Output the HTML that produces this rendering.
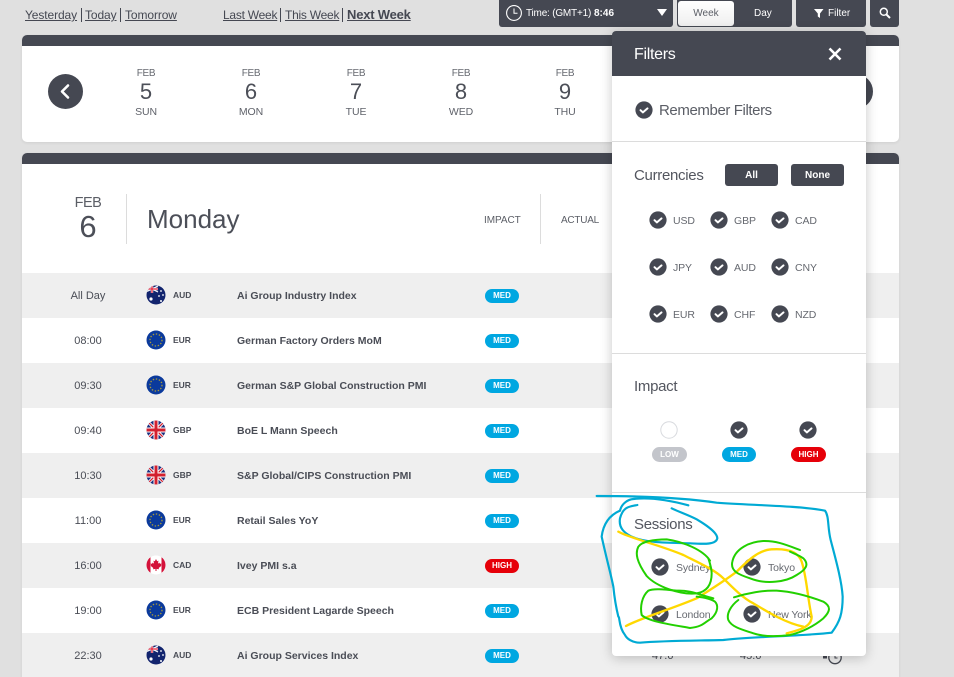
<!DOCTYPE html>
<html><head><meta charset="utf-8"><title>Calendar</title>
<style>
html,body{margin:0;padding:0;width:954px;height:677px;overflow:hidden;background:#e0e0e0}
body{position:relative;font-family:"Liberation Sans",sans-serif;color:#454852}
.a{position:absolute;white-space:nowrap}
.c{transform:translateX(-50%);text-align:center}
.lnk{top:8px;font-size:12px;line-height:14px;text-decoration:underline;color:#454852;letter-spacing:-.1px}
.sep{top:8px;width:1px;height:14px;background:#454852}
.card{position:absolute;left:22px;width:877px;background:#fff;border-radius:5px;box-shadow:0 1px 3px rgba(0,0,0,.08);overflow:hidden}
.bar{position:absolute;left:0;top:0;width:100%;height:11px;background:#454852}
.dk{position:absolute;background:#454852;border-radius:3px;color:#fff}
.m{font-size:10px;line-height:12px;color:#666970;top:68px;letter-spacing:-.3px}
.n{font-size:22px;line-height:24px;color:#4c4f58;top:80px}
.w{font-size:10.5px;line-height:12px;color:#5f626a;top:106px;letter-spacing:-.1px}
.r{position:absolute;left:22px;width:877px;height:45px}
.g{background:#efefef}.wh{background:#fff}
.t{position:absolute;left:0;width:132px;text-align:center;top:17px;font-size:11px;line-height:13px;color:#4a4d56}
.f{position:absolute;left:124px;top:12px;width:20px;height:20px}
.cur{position:absolute;left:151px;top:17px;font-size:8.5px;line-height:10px;font-weight:bold;color:#4a4d56}
.ti{position:absolute;left:215px;top:17px;font-size:10.5px;line-height:13px;font-weight:bold;color:#4a4d56;white-space:nowrap}
.pill{position:absolute;border-radius:8px;color:#fff;font-weight:bold;font-size:8px;text-align:center;height:14px;line-height:14px}
.med{background:#00a7e1}.high{background:#e60009}.low{background:#c3c5cb}
.r .pill{left:463px;top:16px;width:34px}
.pop{position:absolute;left:612px;top:31px;width:254px;height:625px;background:#fff;border-radius:4px;box-shadow:0 2px 12px rgba(0,0,0,.22);z-index:5}
.hr{position:absolute;left:612px;width:254px;height:1px;background:#dcdcdc;z-index:6}
.z{z-index:6}
.h2{font-size:15px;line-height:20px;color:#53565f;left:634px;letter-spacing:-.3px}
.lb{font-size:10.5px;line-height:14px;color:#666970;letter-spacing:-.1px}
.ck{position:absolute;width:18px;height:18px;z-index:6}
</style></head><body>
<svg width="0" height="0" style="position:absolute">
<defs>
<symbol id="ck" viewBox="0 0 18 18"><circle cx="9" cy="9" r="8.6" fill="#454852"/><path d="M5.500 9.200l2.400 2.200 4.600-4" fill="none" stroke="#fff" stroke-width="2" stroke-linecap="round" stroke-linejoin="round"/></symbol>
<clipPath id="cc"><circle cx="10" cy="10" r="9.500"/></clipPath>
<symbol id="eu" viewBox="0 0 20 20"><circle cx="10" cy="10" r="9.500" fill="#0b3a9c"/><circle cx="10" cy="10" r="6" fill="none" stroke="#a89a3c" stroke-width="1.300" stroke-dasharray="1.400 1.700"/></symbol>
<symbol id="au" viewBox="0 0 20 20"><g clip-path="url(#cc)"><rect width="20" height="20" fill="#12246e"/><path d="M0 1l12 6M12 1L0 7" stroke="#fff" stroke-width="1.200"/><path d="M6 0v8M0 4h12" stroke="#fff" stroke-width="2.400"/><path d="M6 0v8M0 4h12" stroke="#e2223a" stroke-width="1.300"/><circle cx="5" cy="14" r="1.600" fill="#fff"/><circle cx="15" cy="6" r=".9" fill="#fff"/><circle cx="17" cy="10" r=".9" fill="#fff"/><circle cx="13" cy="11" r=".9" fill="#fff"/><circle cx="15" cy="16" r="1" fill="#fff"/></g></symbol>
<symbol id="gb" viewBox="0 0 20 20"><g clip-path="url(#cc)"><rect width="20" height="20" fill="#1b2f7e"/><path d="M0 0l20 20M20 0L0 20" stroke="#fff" stroke-width="3"/><path d="M0 0l20 20M20 0L0 20" stroke="#d3202f" stroke-width="1.300"/><path d="M10 0v20M0 10h20" stroke="#fff" stroke-width="5"/><path d="M10 0v20M0 10h20" stroke="#d3202f" stroke-width="3"/></g></symbol>
<symbol id="ca" viewBox="0 0 20 20"><g clip-path="url(#cc)"><rect width="20" height="20" fill="#fff"/><rect width="4.500" height="20" fill="#d4123a"/><rect x="15.500" width="4.500" height="20" fill="#d4123a"/><path d="M10 4l1.200 2.200 1.300-.6-.5 3 1.500-1 .4 1.200 1.600-.2-.6 1.800.6.400-2.800 2.200.3 1.200-2.500-.3v2.100h-1v-2.100l-2.500.3.300-1.200-2.800-2.200.6-.4-.6-1.800 1.600.2.400-1.200 1.500 1-.5-3 1.300.6z" fill="#d4123a"/></g></symbol>
</defs></svg>

<span class="a lnk" style="left:25px">Yesterday</span><i class="a sep" style="left:81px"></i>
<span class="a lnk" style="left:85px">Today</span><i class="a sep" style="left:120px"></i>
<span class="a lnk" style="left:125px">Tomorrow</span>
<span class="a lnk" style="left:223px;letter-spacing:-.25px">Last Week</span><i class="a sep" style="left:280px"></i>
<span class="a lnk" style="left:285px;letter-spacing:-.25px">This Week</span><i class="a sep" style="left:342px"></i>
<span class="a lnk" style="left:347px;font-weight:bold;font-size:13px;letter-spacing:-.2px">Next Week</span>

<div class="dk" style="left:499px;top:-3px;width:174px;height:30px"></div>
<svg class="a" style="left:505px;top:4px" width="18" height="18" viewBox="0 0 18 18"><circle cx="9" cy="9" r="7.400" fill="none" stroke="#fff" stroke-width="1.100"/><path d="M9 4.500V9.300H12.500" fill="none" stroke="#fff" stroke-width="1"/></svg>
<span class="a" style="left:526px;top:7px;font-size:10px;line-height:13px;color:#fff;letter-spacing:-.2px">Time: (GMT+1)</span>
<span class="a" style="left:594px;top:7px;font-size:10px;line-height:13px;color:#fff;font-weight:bold">8:46</span>
<svg class="a" style="left:657px;top:9px" width="11" height="8"><path d="M0 0h10L5 7z" fill="#fff"/></svg>
<div class="dk" style="left:677px;top:-3px;width:115px;height:30px"></div>
<div class="a" style="left:678px;top:1px;width:56px;height:25px;background:linear-gradient(#fff,#efefef);border-radius:3px;text-align:center;font-size:10px;line-height:25px;color:#5b5e66">Week</div>
<span class="a" style="left:754px;top:7px;font-size:10px;line-height:13px;color:#fff">Day</span>
<div class="dk" style="left:796px;top:-3px;width:70px;height:30px"></div>
<svg class="a" style="left:814px;top:9px" width="10" height="9"><path d="M0 0h9.500L6 4.500V9L3.800 7.500V4.500z" fill="#fff"/></svg>
<span class="a" style="left:828px;top:7px;font-size:10px;line-height:13px;color:#fff">Filter</span>
<div class="dk" style="left:870px;top:-3px;width:29px;height:30px"></div>
<svg class="a" style="left:879px;top:7px" width="12" height="12"><circle cx="4.800" cy="4.800" r="3.500" fill="none" stroke="#fff" stroke-width="1.500"/><path d="M7.500 7.500L11 11" stroke="#fff" stroke-width="2"/></svg>

<div class="card" style="top:35px;height:107px"><div class="bar"></div></div>
<svg class="a" style="left:48px;top:74px" width="35" height="35"><circle cx="17.500" cy="17.500" r="17.500" fill="#454852"/><path d="M20 11.500l-6 6 6 6" fill="none" stroke="#fff" stroke-width="2.600" stroke-linecap="round" stroke-linejoin="round"/></svg>
<svg class="a" style="left:838px;top:74px" width="35" height="35"><circle cx="17.500" cy="17.500" r="17.500" fill="#454852"/></svg>

<span class="a c m" style="left:146px">FEB</span><span class="a c n" style="left:146px">5</span><span class="a c w" style="left:146px">SUN</span>
<span class="a c m" style="left:251px">FEB</span><span class="a c n" style="left:251px">6</span><span class="a c w" style="left:251px">MON</span>
<span class="a c m" style="left:356px">FEB</span><span class="a c n" style="left:356px">7</span><span class="a c w" style="left:356px">TUE</span>
<span class="a c m" style="left:461px">FEB</span><span class="a c n" style="left:461px">8</span><span class="a c w" style="left:461px">WED</span>
<span class="a c m" style="left:565px">FEB</span><span class="a c n" style="left:565px">9</span><span class="a c w" style="left:565px">THU</span>

<div class="card" style="top:153px;height:540px"><div class="bar"></div></div>
<span class="a c" style="left:88px;top:194px;font-size:14.500px;line-height:18px;color:#5b5e66;letter-spacing:-.5px">FEB</span>
<span class="a c" style="left:88px;top:209px;font-size:31px;line-height:36px;color:#4c4f58">6</span>
<div class="a" style="left:126px;top:194px;width:1px;height:50px;background:#dcdcdc"></div>
<span class="a" style="left:147px;top:203px;font-size:26px;line-height:32px;color:#4c4f58">Monday</span>
<span class="a" style="left:484px;top:214px;font-size:10px;line-height:13px;color:#5b5e66;letter-spacing:-.05px">IMPACT</span>
<div class="a" style="left:540px;top:194px;width:1px;height:50px;background:#dcdcdc"></div>
<span class="a" style="left:561px;top:214px;font-size:10px;line-height:13px;color:#5b5e66;letter-spacing:-.25px">ACTUAL</span>

<div class="r g" style="top:273px"><span class="t">All Day</span><svg class="f"><use href="#au"/></svg><span class="cur">AUD</span><span class="ti">Ai Group Industry Index</span><span class="pill med">MED</span></div>
<div class="r wh" style="top:318px"><span class="t">08:00</span><svg class="f"><use href="#eu"/></svg><span class="cur">EUR</span><span class="ti">German Factory Orders MoM</span><span class="pill med">MED</span></div>
<div class="r g" style="top:363px"><span class="t">09:30</span><svg class="f"><use href="#eu"/></svg><span class="cur">EUR</span><span class="ti">German S&amp;P Global Construction PMI</span><span class="pill med">MED</span></div>
<div class="r wh" style="top:408px"><span class="t">09:40</span><svg class="f"><use href="#gb"/></svg><span class="cur">GBP</span><span class="ti">BoE L Mann Speech</span><span class="pill med">MED</span></div>
<div class="r g" style="top:453px"><span class="t">10:30</span><svg class="f"><use href="#gb"/></svg><span class="cur">GBP</span><span class="ti">S&amp;P Global/CIPS Construction PMI</span><span class="pill med">MED</span></div>
<div class="r wh" style="top:498px"><span class="t">11:00</span><svg class="f"><use href="#eu"/></svg><span class="cur">EUR</span><span class="ti">Retail Sales YoY</span><span class="pill med">MED</span></div>
<div class="r g" style="top:543px"><span class="t">16:00</span><svg class="f"><use href="#ca"/></svg><span class="cur">CAD</span><span class="ti">Ivey PMI s.a</span><span class="pill high">HIGH</span></div>
<div class="r wh" style="top:588px"><span class="t">19:00</span><svg class="f"><use href="#eu"/></svg><span class="cur">EUR</span><span class="ti">ECB President Lagarde Speech</span><span class="pill med">MED</span></div>
<div class="r g" style="top:633px;height:44px"><span class="t">22:30</span><svg class="f"><use href="#au"/></svg><span class="cur">AUD</span><span class="ti">Ai Group Services Index</span><span class="pill med">MED</span>
<span class="a" style="left:630px;top:17px;font-size:11px;line-height:13px">47.6</span><span class="a" style="left:718px;top:17px;font-size:11px;line-height:13px">45.6</span></div>
<svg class="a" style="left:821px;top:648px" width="22" height="18"><rect x="2" y="8" width="4" height="2.500" fill="#454852"/><circle cx="14" cy="9.500" r="6.200" fill="none" stroke="#454852" stroke-width="1.300"/><path d="M14 5.500V10H16.500" fill="none" stroke="#454852"/></svg>

<div class="pop"><div style="height:45px;background:#454852;border-radius:4px 4px 0 0"></div></div>
<span class="a z" style="left:634px;top:44px;font-size:16px;line-height:21px;color:#fff;letter-spacing:-.3px">Filters</span>
<svg class="a z" style="left:828px;top:47px" width="14" height="14"><path d="M1.500 1.500l11 11M12.500 1.500l-11 11" stroke="#fff" stroke-width="2.600"/></svg>
<svg class="ck" style="left:635px;top:101px"><use href="#ck"/></svg>
<span class="a z" style="left:659px;top:102px;font-size:15px;line-height:18px;color:#5b5e66;letter-spacing:-.4px">Remember Filters</span>
<div class="hr" style="top:141px"></div>

<span class="a z h2" style="top:166px">Currencies</span>
<div class="dk z" style="left:725px;top:164px;width:53px;height:22px;text-align:center;font-size:10px;font-weight:bold;line-height:23px">All</div>
<div class="dk z" style="left:791px;top:164px;width:53px;height:22px;text-align:center;font-size:10px;font-weight:bold;line-height:23px">None</div>

<svg class="ck" style="left:649px;top:211px"><use href="#ck"/></svg><span class="a z lb" style="left:673px;top:214px">USD</span>
<svg class="ck" style="left:710px;top:211px"><use href="#ck"/></svg><span class="a z lb" style="left:734px;top:214px">GBP</span>
<svg class="ck" style="left:771px;top:211px"><use href="#ck"/></svg><span class="a z lb" style="left:795px;top:214px">CAD</span>
<svg class="ck" style="left:649px;top:258px"><use href="#ck"/></svg><span class="a z lb" style="left:673px;top:261px">JPY</span>
<svg class="ck" style="left:710px;top:258px"><use href="#ck"/></svg><span class="a z lb" style="left:734px;top:261px">AUD</span>
<svg class="ck" style="left:771px;top:258px"><use href="#ck"/></svg><span class="a z lb" style="left:795px;top:261px">CNY</span>
<svg class="ck" style="left:649px;top:305px"><use href="#ck"/></svg><span class="a z lb" style="left:673px;top:308px">EUR</span>
<svg class="ck" style="left:710px;top:305px"><use href="#ck"/></svg><span class="a z lb" style="left:734px;top:308px">CHF</span>
<svg class="ck" style="left:771px;top:305px"><use href="#ck"/></svg><span class="a z lb" style="left:795px;top:308px">NZD</span>
<div class="hr" style="top:353px"></div>

<span class="a z h2" style="top:377px">Impact</span>
<svg class="ck" style="left:660px;top:421px"><circle cx="9" cy="9" r="8.200" fill="#fff" stroke="#d8dade"/></svg>
<svg class="ck" style="left:730px;top:421px"><use href="#ck"/></svg>
<svg class="ck" style="left:799px;top:421px"><use href="#ck"/></svg>
<span class="pill low z" style="left:652px;top:447px;width:35px;height:15px;line-height:15px">LOW</span>
<span class="pill med z" style="left:722px;top:447px;width:34px;height:15px;line-height:15px">MED</span>
<span class="pill high z" style="left:791px;top:447px;width:35px;height:15px;line-height:15px">HIGH</span>
<div class="hr" style="top:492px"></div>

<span class="a z h2" style="top:515px">Sessions</span>
<svg class="ck" style="left:651px;top:558px"><use href="#ck"/></svg><span class="a z lb" style="left:676px;top:561px">Sydney</span>
<svg class="ck" style="left:743px;top:558px"><use href="#ck"/></svg><span class="a z lb" style="left:768px;top:561px">Tokyo</span>
<svg class="ck" style="left:651px;top:605px"><use href="#ck"/></svg><span class="a z lb" style="left:676px;top:608px">London</span>
<svg class="ck" style="left:743px;top:605px"><use href="#ck"/></svg><span class="a z lb" style="left:768px;top:608px">New York</span>

<svg class="a" style="left:590px;top:490px;z-index:7;pointer-events:none" width="270" height="187" viewBox="0 0 810 561" fill="none" stroke-linecap="round" stroke-linejoin="round">
<g stroke="#00aad4" stroke-width="6.500">
<path d="M20 18C120 18 260 20 380 38C480 46 620 46 705 62C718 80 712 110 722 150C735 200 755 270 758 320C758 370 750 395 725 428C640 438 480 440 400 450C320 452 220 452 150 458C125 458 110 445 105 435C85 410 90 380 85 380C75 340 72 310 70 290C62 250 48 200 35 140C40 100 60 75 90 62"/>
<path d="M142 45C120 50 100 48 90 85C85 115 105 130 125 140C170 160 240 158 300 160C340 162 378 165 382 145C382 125 340 100 320 88C295 75 265 65 245 55"/>
<path d="M90 62C95 40 115 28 130 27C190 20 255 35 295 46"/>
</g>
<g stroke="#ffd800" stroke-width="7">
<path d="M85 125C120 145 210 165 280 195C330 220 375 240 400 265C430 295 460 325 490 340C540 370 590 400 640 410"/>
<path d="M108 408C150 385 250 355 320 325C360 300 400 275 440 245C470 215 505 180 545 178C590 175 625 185 635 215C650 260 652 320 665 380C665 410 630 420 590 430"/>
</g>
<g stroke="#22d000" stroke-width="6">
<path d="M360 212C340 180 280 155 230 148C190 148 155 155 145 170C135 190 140 215 170 258C200 290 270 315 320 310C350 305 365 285 365 250C365 235 360 220 355 205"/>
<path d="M630 180C590 165 560 152 520 153C480 155 435 175 427 215C420 245 450 255 480 265C530 285 590 275 620 255C645 240 660 225 640 205C625 195 610 190 600 185"/>
<path d="M370 325C330 315 300 300 260 302C220 298 190 295 175 302C155 320 150 350 155 375C175 395 250 405 300 414C340 410 345 395 365 385C385 365 385 345 375 335C360 325 340 322 320 320"/>
<path d="M432 322C470 310 520 300 560 302C610 305 660 320 700 335C725 350 720 365 700 385C670 410 640 425 600 435C560 440 520 440 490 430C460 420 425 412 415 390C408 370 425 345 445 330"/>
</g>
</svg>
</body></html>
